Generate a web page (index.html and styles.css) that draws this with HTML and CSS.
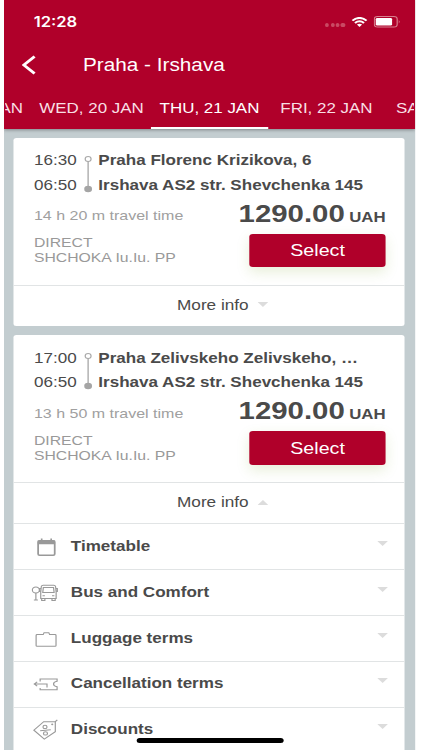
FILE: index.html
```html
<!DOCTYPE html>
<html lang="en">
<head>
<meta charset="utf-8">
<title>Praha - Irshava</title>
<link rel="stylesheet" href="styles.css">
</head>
<body>
<main class="screen">
  <header class="header">
    <div class="status">
      <span class="clock">12:28</span>
      <span class="dots"><i></i><i></i><i></i><i></i></span>
      <svg class="wifi" viewBox="0 0 14 10"><path d="M1 3.600Q7-1.800 13 3.600M3.200 6Q7 2.500 10.800 6" fill="none" stroke="#fff" stroke-width="1.900"/><path d="M4.800 7.600Q7 5.700 9.200 7.600L7 10Z" fill="#fff"/></svg>
      <svg class="battery" viewBox="0 0 23 12"><rect x=".5" y=".5" width="19.300" height="10.600" rx="2.800" fill="none" stroke="#d8808f"/><rect x="1.700" y="2" width="13.800" height="7.600" rx="1.300" fill="#fff"/><path d="M21.200 4q1.500 1.800 0 3.600z" fill="#d8808f"/></svg>
    </div>
    <div class="titlebar">
      <svg class="back" viewBox="0 0 12 20"><path d="M10.800 1.500 1.700 10l9.100 8.500" fill="none" stroke="#fff" stroke-width="2.500"/></svg>
      <h1 class="title">Praha - Irshava</h1>
    </div>
    <nav class="tabs">
      <span class="tab tab-first">TUE, 19 JAN</span>
      <span class="tab tab-wide">WED, 20 JAN</span>
      <span class="tab active">THU, 21 JAN</span>
      <span class="tab">FRI, 22 JAN</span>
      <span class="tab">SAT, 23 JAN</span>
    </nav>
  </header>

  <article class="card">
    <div class="trip">
      <div class="route">
        <div class="times"><span>16:30</span><span>06:50</span></div>
        <svg class="line" viewBox="0 0 8 38"><path d="M4 6v27" stroke="#b4b4b4" stroke-width="1.300"/><circle cx="4" cy="4" r="2.500" fill="#fff" stroke="#a9a9a9"/><circle cx="4" cy="34" r="3.300" fill="#a5a5a5"/></svg>
        <div class="stops"><span>Praha Florenc Krizikova, 6</span><span>Irshava AS2 str. Shevchenka 145</span></div>
      </div>
      <div class="fare">
        <span class="duration">14 h 20 m travel time</span>
        <span class="price">1290.00 <small>UAH</small></span>
      </div>
      <div class="book">
        <div class="carrier">DIRECT<br>SHCHOKA Iu.Iu. PP</div>
        <button class="select">Select</button>
      </div>
    </div>
    <div class="more">More info <svg class="arrow" viewBox="0 0 9 5"><path d="M0 0h9L4.500 5z"/></svg></div>
  </article>

  <article class="card">
    <div class="trip">
      <div class="route">
        <div class="times"><span>17:00</span><span>06:50</span></div>
        <svg class="line" viewBox="0 0 8 38"><path d="M4 6v27" stroke="#b4b4b4" stroke-width="1.300"/><circle cx="4" cy="4" r="2.500" fill="#fff" stroke="#a9a9a9"/><circle cx="4" cy="34" r="3.300" fill="#a5a5a5"/></svg>
        <div class="stops"><span>Praha Zelivskeho Zelivskeho, …</span><span>Irshava AS2 str. Shevchenka 145</span></div>
      </div>
      <div class="fare">
        <span class="duration">13 h 50 m travel time</span>
        <span class="price">1290.00 <small>UAH</small></span>
      </div>
      <div class="book">
        <div class="carrier">DIRECT<br>SHCHOKA Iu.Iu. PP</div>
        <button class="select">Select</button>
      </div>
    </div>
    <div class="more">More info <svg class="arrow" viewBox="0 0 9 5"><path d="M0 5h9L4.500 0z"/></svg></div>
    <ul class="details">
      <li class="row">
        <svg class="icon" viewBox="0 0 24 24"><rect x="5.800" y="5.800" width="14" height="14.500" rx="1.200" stroke-width="1.500"/><path d="M5.500 5.500h14.600v3.700H5.500z" fill="#999" stroke="none"/><path d="M8.800 3.500v3M16.800 3.500v3" stroke-width="1.400"/></svg>
        <span class="label">Timetable</span><svg class="arrow" viewBox="0 0 9 5"><path d="M0 0h9L4.500 5z"/></svg>
      </li>
      <li class="row">
        <svg class="icon" viewBox="0 0 24 24"><circle cx="3.900" cy="9" r="3"/><path d="M3.900 12V18.500M2.200 18.900h3.400"/><path d="M10 4.200h9q1.300 0 1.500 1.300l.5 5.500v6.500H8v-6.500l.5-5.500q.2-1.300 1.500-1.300zM10.200 6.600h8.600l.5 5h-9.600zM8.300 7.500H7v3.500M20.700 7.500H22V11M9.500 14.800h2M17.500 14.800h2M8.800 17.500v2h2.700v-2M17.500 17.500v2h2.700v-2"/></svg>
        <span class="label">Bus and Comfort</span><svg class="arrow" viewBox="0 0 9 5"><path d="M0 0h9L4.500 5z"/></svg>
      </li>
      <li class="row lower">
        <svg class="icon" viewBox="0 0 24 24"><path d="M4.900 7.600h5.200l.7-1.900h4l.7 1.900h4.600q.8 0 .8.800v10q0 .8-.8.800H4.900q-.8 0-.8-.8v-10q0-.8.800-.8z"/></svg>
        <span class="label">Luggage terms</span><svg class="arrow" viewBox="0 0 9 5"><path d="M0 0h9L4.500 5z"/></svg>
      </li>
      <li class="row">
        <svg class="icon" viewBox="0 0 24 24"><path d="M7.500 9.500V7h14.300v2.300q-3 .6-3 2.700t3 2.700v3H7.500v-1.800M2.500 12H13.300v3.500M5 9.800 2.500 12 5 14.200"/></svg>
        <span class="label">Cancellation terms</span><svg class="arrow" viewBox="0 0 9 5"><path d="M0 0h9L4.500 5z"/></svg>
      </li>
      <li class="row">
        <svg class="icon" viewBox="0 0 24 24"><path d="M10.500 3.700h9.800v10L11 21.200 2.200 12.200zM20.300 3.700 22 1.800M7.500 12.700 16.500 11.700"/><circle cx="11.600" cy="8.900" r="1.700"/><circle cx="12" cy="15.400" r="1.700"/><circle cx="17.700" cy="6.300" r=".4"/></svg>
        <span class="label">Discounts</span><svg class="arrow" viewBox="0 0 9 5"><path d="M0 0h9L4.500 5z"/></svg>
      </li>
    </ul>
  </article>
  <div class="home"></div>
</main>
</body>
</html>
```
FILE: styles.css
```css
* { box-sizing: border-box; }

body {
  margin: 0;
  height: 750px;
  overflow: hidden;
  background: #fff;
  font-family: "Liberation Sans", Arial, sans-serif;
  color: #4a4a4a;
}

.screen {
  position: relative;
  width: 347px;
  height: 750px;
  margin-left: 4px;
  overflow: hidden;
  background: #c3cdd0;
  transform: scaleX(1.185);
  transform-origin: 0 0;
}

.header {
  height: 129.3px;
  background: #b0002a;
  color: #fff;
  box-shadow: 0 1px 3px rgba(0, 0, 0, .35);
}

.status {
  display: flex;
  align-items: center;
  height: 43px;
  padding: 0 12.5px 0 25px;
}
.clock { flex: 1; font: 600 14px/43px Inter, sans-serif; }
.dots { display: flex; gap: 1.2px; margin: 7px 5px 0 0; }
.dots i { width: 3.2px; height: 3.2px; border-radius: 50%; background: #c94a63; }
.wifi { width: 14px; height: 10px; margin-right: 5px; }
.battery { width: 23px; height: 12px; }

.titlebar { display: flex; align-items: center; height: 43px; padding: 1px 0 0 14.5px; }
.back { width: 12px; height: 20px; }
.title { margin: 0 0 0 40.2px; font-size: 17.5px; font-weight: 400; line-height: 41px; }

.tabs { display: flex; height: 43.3px; margin: 0 1px; overflow: hidden; }
.tab {
  flex: none;
  width: 98.7px;
  text-align: center;
  font-size: 14.3px;
  line-height: 44.5px;
  color: #f8dfe4;
}
.tab-first { margin-left: -76px; }
.tab-wide { width: 100.4px; }
.active { color: #fff; border-bottom: 2.5px solid #fff; }

.card {
  margin: 8.7px 8.6px 0 8.4px;
  background: #fff;
  border-radius: 2.5px;
}
.card + .card { margin-top: 9.5px; border-radius: 2.5px 2.5px 0 0; }

.trip { height: 147px; padding: 10.5px 16.4px 0 16.9px; }
.route { display: flex; height: 48.5px; font-size: 14.4px; line-height: 24.2px; }
.times, .stops { display: flex; flex-direction: column; }
.times { width: 41.4px; }
.line { width: 8px; height: 38px; margin-top: 6.5px; }
.stops { margin-left: 4.9px; font-weight: 700; white-space: nowrap; }

.fare { display: flex; justify-content: space-between; height: 37px; line-height: 34px; }
.duration { padding-top: 2.3px; font-size: 13.5px; color: #a0a0a0; }
.price { font-size: 24.8px; font-weight: 700; white-space: nowrap; }
.price small { margin-left: -3.2px; font-size: 14.2px; }

.book { display: flex; justify-content: space-between; }
.carrier { padding-top: 2.5px; font-size: 13.3px; line-height: 14.8px; color: #999; }
.select {
  width: 114.8px;
  height: 33.5px;
  padding: 0;
  border: 0;
  border-radius: 3px;
  background: #b0002a;
  color: #fff;
  font: 16.6px/33px "Liberation Sans", Arial, sans-serif;
  box-shadow: 0 5px 12px rgba(120, 160, 40, .18);
}

.more {
  display: flex;
  justify-content: center;
  align-items: center;
  gap: 8px;
  height: 41px;
  padding: 0 0 2.6px 22.7px;
  border-top: 1px solid #e1e4e5;
  font-size: 14.5px;
}
.arrow { width: 9px; height: 5px; fill: #dcdcdc; }

.details { margin: 0; padding: 0; list-style: none; }
.row {
  display: flex;
  align-items: center;
  height: 45.8px;
  padding: 0 14px 0 15px;
  border-top: 1px solid #e1e4e5;
}
.lower { padding-top: 1px; }
.icon { width: 24px; height: 24px; fill: none; stroke: #999; stroke-width: 1; }
.label { flex: 1; margin-left: 9px; padding-bottom: 2px; font-size: 14.4px; font-weight: 700; }
.row .arrow { margin-bottom: 7px; }

.home {
  position: absolute;
  left: 111.8px;
  top: 738px;
  width: 124px;
  height: 5px;
  border-radius: 3px;
  background: #000;
}
```
